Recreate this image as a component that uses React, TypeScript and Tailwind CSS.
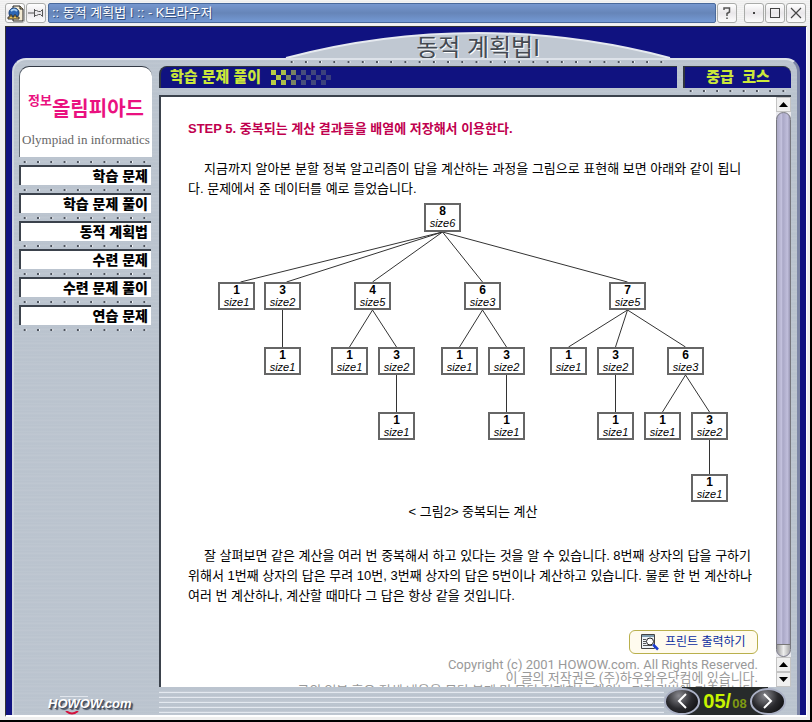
import React from "react";

const KR = "font-['Liberation_Sans','Noto_Sans_CJK_KR',sans-serif]";
const METAL =
  "bg-[#bcc5d0] bg-[repeating-linear-gradient(180deg,#bec7d1_0px,#b9c2cd_2px,#c0c8d2_3px,#bac3ce_5px,#bbc4cf_7px)]";

const nodes = [
  { x: 236, y: 0, n: 8, size: 6 },
  { x: 30, y: 79, n: 1, size: 1 },
  { x: 76, y: 79, n: 3, size: 2 },
  { x: 166, y: 79, n: 4, size: 5 },
  { x: 276, y: 79, n: 6, size: 3 },
  { x: 421, y: 79, n: 7, size: 5 },
  { x: 76, y: 144, n: 1, size: 1 },
  { x: 143, y: 144, n: 1, size: 1 },
  { x: 190, y: 144, n: 3, size: 2 },
  { x: 253, y: 144, n: 1, size: 1 },
  { x: 300, y: 144, n: 3, size: 2 },
  { x: 362, y: 144, n: 1, size: 1 },
  { x: 409, y: 144, n: 3, size: 2 },
  { x: 479, y: 144, n: 6, size: 3 },
  { x: 190, y: 209, n: 1, size: 1 },
  { x: 300, y: 209, n: 1, size: 1 },
  { x: 409, y: 209, n: 1, size: 1 },
  { x: 456, y: 209, n: 1, size: 1 },
  { x: 503, y: 209, n: 3, size: 2 },
  { x: 503, y: 271, n: 1, size: 1 },
];

const edges: [number, number][] = [
  [0, 1], [0, 2], [0, 3], [0, 4], [0, 5],
  [2, 6], [3, 7], [3, 8], [4, 9], [4, 10],
  [5, 11], [5, 12], [5, 13],
  [8, 14], [10, 15], [12, 16], [13, 17], [13, 18], [18, 19],
];

const menu = ["학습 문제", "학습 문제 풀이", "동적 계획법", "수련 문제", "수련 문제 풀이", "연습 문제"];

function Rivets({ className = "" }: { className?: string }) {
  return (
    <div
      aria-hidden="true"
      className={`h-[3px] bg-[linear-gradient(90deg,transparent_5px,#4c525c_5px,#4c525c_7px,#f4f6fa_7px,#f4f6fa_8px,transparent_8px)] bg-[length:14px_2px] [background-repeat:round_no-repeat] ${className}`}
    />
  );
}

function TitleBar() {
  const btn =
    "flex h-5 w-5 items-center justify-center rounded-[3px] border border-[#a9aba9] bg-[linear-gradient(#ffffff,#e9e7ea_50%,#fdfdfd)] text-[#555]";
  return (
    <header className="flex h-[26px] shrink-0 items-center gap-px bg-[repeating-linear-gradient(#f3f3f3_0px,#f3f3f3_1px,#e9e9e9_2px)] pr-1 pl-[5px]">
      <button className={btn} aria-label="창 메뉴">
        <svg width="17" height="17" viewBox="0 0 17 17">
          <path d="M6 1h7l3 3v12H6z" fill="#f3ead2" stroke="#222" />
          <path d="M13 1v3h3" fill="#cdbb8a" stroke="#222" />
          <circle cx="7" cy="8" r="5" fill="#2c66b4" stroke="#123a70" />
          <path d="M4 6q3-3 6 0" fill="none" stroke="#a9d0f5" strokeWidth="2" />
          <path d="M1 14v-2h2v-2h2v2h2v-2h2v2h3v2z" fill="#edc65a" stroke="#333" />
        </svg>
      </button>
      <button className={btn} aria-label="고정">
        <svg width="16" height="12" viewBox="0 0 16 12" fill="none" stroke="#555">
          <path d="M0 6h6M6.500 2v8M6.500 3.500h2l2 1h2l2-2v7l-2-2h-2l-2 1h-2" />
        </svg>
      </button>
      <h1 className="ml-px flex h-5 flex-1 items-center rounded-[2px] border border-[#49699b] bg-[linear-gradient(#7697cf,#6685b8_50%,#7499d4)] pl-[3px] text-[13px] whitespace-pre text-white [text-shadow:1px_1px_0_#33507f]">
        {":: 동적 계획법 I :: - K브라우저"}
      </h1>
      <button className={btn} aria-label="도움말">
        <svg width="10" height="14" viewBox="0 0 10 14" fill="none" stroke="#555" strokeWidth="1.500">
          <path d="M2 4V2h5.500v4L5 7.500V10M5 11.500V13" />
        </svg>
      </button>
      <button className={`${btn} ml-1.5`} aria-label="최소화">
        <span className="size-[2px] bg-[#444]" />
      </button>
      <button className={btn} aria-label="최대화">
        <span className="size-[10px] border border-[#444]" />
      </button>
      <button className={btn} aria-label="닫기">
        <svg width="12" height="12" viewBox="0 0 12 12" stroke="#444" strokeWidth="1.200">
          <path d="M1 1l10 10M11 1L1 11" />
        </svg>
      </button>
    </header>
  );
}

function Sidebar() {
  return (
    <aside className="flex w-[133px] shrink-0 flex-col pt-[6px]">
      <div className="flex h-[91px] flex-col items-center rounded-t-[10px] border-t border-l border-t-[#333a44] border-l-[#5c6470] bg-white pt-[24px] whitespace-nowrap">
        <div className="flex h-8 items-start font-bold text-[#ea1180]">
          <span className="text-[13px] leading-5">정보</span>
          <span className="text-[20px] leading-9">올림피아드</span>
        </div>
        <div className="mt-[7px] font-['Liberation_Serif',serif] text-[13px] leading-5 text-[#666]">
          Olympiad in informatics
        </div>
      </div>
      <nav className="flex flex-col">
        {menu.map((m) => (
          <div key={m}>
            <Rivets className="mt-1 mb-px" />
            <a
              href="#"
              className="mr-px flex h-5 items-center justify-end border-t-2 border-l-2 border-t-[#3b424c] border-l-[#3b424c] bg-white pr-[3px] text-[14px] font-black text-black"
            >
              {m}
            </a>
          </div>
        ))}
        <Rivets className="mt-1" />
      </nav>
      <div className="mt-auto ml-[29px] flex flex-col">
        <div className="ml-3 h-px w-7 bg-[#e0e5ec]" />
        <div className="text-[13px] leading-[14px] font-bold text-white italic [text-shadow:1px_1px_0_#47505e,2px_2px_1px_#47505e]">
          HOWOW.com
        </div>
        <svg width="14" height="4" viewBox="0 0 14 4" className="ml-[17px]" aria-hidden="true">
          <path d="M1 0q6 5 12 0" fill="none" stroke="#d3123c" strokeWidth="2" />
        </svg>
      </div>
    </aside>
  );
}

function CallTree() {
  const bottom = (i: number) => nodes[i].y + (i === 0 ? 29 : 28);
  return (
    <figure className="flex flex-col items-center">
      <div className="relative h-[299px] w-[570px]">
        <svg width="570" height="299" className="block" stroke="#333" aria-hidden="true">
          {edges.map(([a, b]) => (
            <line
              key={`${a}-${b}`}
              x1={nodes[a].x + 18.5}
              y1={bottom(a)}
              x2={nodes[b].x + (a === 0 && b < 3 ? 22.5 : 18.5)}
              y2={nodes[b].y}
            />
          ))}
        </svg>
        {nodes.map((d, i) => (
          <div
            key={i}
            className={`absolute w-[37px] border-2 border-[#666] bg-white text-center text-black ${i === 0 ? "h-[29px]" : "h-7"}`}
            style={{ left: d.x, top: d.y }}
          >
            <b className="block text-[12px] leading-3">{d.n}</b>
            <i className="block text-[11px] leading-3">size{d.size}</i>
          </div>
        ))}
      </div>
      <figcaption>&lt; 그림2&gt; 중복되는 계산</figcaption>
    </figure>
  );
}

function Arrow({ down = false }: { down?: boolean }) {
  return (
    <button
      aria-label={down ? "아래로" : "위로"}
      className="flex h-[15px] shrink-0 items-center justify-center border border-[#c4c4c4] bg-[#f0f0f0]"
    >
      <svg width="9" height="5" viewBox="0 0 9 5">
        <path d={down ? "M0 0h9L4.500 5z" : "M0 5h9L4.500 0z"} />
      </svg>
    </button>
  );
}

function PageBody() {
  return (
    <div className="flex min-h-0 flex-1 border-t-2 border-l-2 border-[#3b424c] bg-white">
      <article className="min-w-0 flex-1 overflow-hidden pt-[22px] pr-[18px] pl-[27px] text-[13px] leading-5 whitespace-nowrap text-black">
        <h2 className="font-bold text-[#c0004e]">
          STEP 5. 중복되는 계산 결과들을 배열에 저장해서 이용한다.
        </h2>
        <p className="mt-5 mb-1 indent-4">
          지금까지 알아본 분할 정복 알고리즘이 답을 계산하는 과정을 그림으로 표현해 보면 아래와 같이 됩니
          <br />
          다. 문제에서 준 데이터를 예로 들었습니다.
        </p>
        <CallTree />
        <p className="mt-6 indent-4">
          잘 살펴보면 같은 계산을 여러 번 중복해서 하고 있다는 것을 알 수 있습니다. 8번째 상자의 답을 구하기
          <br />
          위해서 1번째 상자의 답은 무려 10번, 3번째 상자의 답은 5번이나 계산하고 있습니다. 물론 한 번 계산하나
          <br />
          여러 번 계산하나, 계산할 때마다 그 답은 항상 같을 것입니다.
        </p>
        <div className="mt-6 flex justify-end">
          <button className="flex h-6 w-[129px] items-center gap-[6px] rounded-md border border-[#b9b04c] bg-[#fffbee] pl-[11px] text-[12px] text-[#0a2ca0]">
            <svg width="18" height="17" viewBox="0 0 18 17">
              <path d="M.5.5h13v14H.5z" fill="#eef3f7" stroke="#444" />
              <path d="M1 2h12" stroke="#7f9db0" strokeWidth="2" />
              <path d="M2 5.500h3M2 7.500h3M2 9.500h3M2 11.500h9" stroke="#555" />
              <circle cx="9" cy="7.500" r="3.500" fill="#fff" stroke="#222" />
              <path d="M12 10.500l5 5" stroke="#1b3bd0" strokeWidth="2.500" />
            </svg>
            프린트 출력하기
          </button>
        </div>
        <footer className="mt-1 flex flex-col items-end font-['Roboto','Noto_Sans_CJK_KR',sans-serif] text-[13px] leading-[13px] text-[#999]">
          <span>Copyright (c) 2001 HOWOW.com. All Rights Reserved.</span>
          <span>이 글의 저작권은 (주)하우와우닷컴에 있습니다.</span>
          <span>글의 일부 혹은 전체 내용을 무단 복제 및 무단 전재하는 행위는 저작권법에 저촉됩니다.</span>
        </footer>
      </article>
      <div className="flex w-[15px] shrink-0 flex-col bg-[#e9e9ee]">
        <Arrow />
        <div className="flex flex-1 flex-col justify-end overflow-hidden rounded-full border border-[#77777f] bg-[linear-gradient(90deg,#aaa8c4,#c3c1dd_35%,#a9a7c6_45%,#c0bedb_80%,#9997b3)]">
          <span className="h-3 rounded-b-full border-t border-[#777] bg-[linear-gradient(90deg,#999,#eee_50%,#aaa)]" />
        </div>
        <Arrow />
        <Arrow down />
      </div>
    </div>
  );
}

function Pager() {
  const round =
    "flex h-[27px] w-9 items-center justify-center rounded-[50%] border-2 border-[#aab0c4] bg-[radial-gradient(circle_at_40%_25%,#8a8a90,#2a2a2e_50%,#050505)]";
  return (
    <div className="flex h-7 shrink-0 items-center rounded-full bg-[linear-gradient(90deg,transparent_18px,#272b2b_18px,#272b2b_104px,transparent_104px)]">
      <button className={round} aria-label="이전">
        <svg width="10" height="16" viewBox="0 0 10 16" fill="none" stroke="#fff" strokeWidth="2">
          <path d="M9 1L2 8l7 7" />
        </svg>
      </button>
      <div className="flex w-[50px] items-baseline justify-center gap-px font-bold whitespace-nowrap">
        <span className="text-[20px] leading-7 text-[#c8f400]">05/</span>
        <span className="text-[13px] text-[#7f9a12]">08</span>
      </div>
      <button className={round} aria-label="다음">
        <svg width="10" height="16" viewBox="0 0 10 16" fill="none" stroke="#fff" strokeWidth="2">
          <path d="M1 1l7 7-7 7" />
        </svg>
      </button>
    </div>
  );
}

function Checks() {
  const cells = [];
  for (let c = 0; c < 12; c++)
    for (let r = 0; r < 3; r++)
      if ((c + r) % 2 === 0)
        cells.push(
          <rect
            key={`${c}-${r}`}
            x={c * 5}
            y={r * 5}
            width="5"
            height="5"
            fill={c < 3 ? "#b9cc45" : c < 5 ? "#8e9a5c" : "#59617a"}
            opacity={1 - c * 0.04}
          />,
        );
  return (
    <svg width="60" height="15" aria-hidden="true">
      {cells}
    </svg>
  );
}

export default function App() {
  return (
    <div className={`flex h-screen flex-col border-r-2 border-b-2 border-black bg-[#efefef] ${KR}`}>
      <TitleBar />
      <main className="mr-[3px] mb-[3px] ml-[5px] flex min-h-0 flex-1 flex-col border-t border-r border-b-2 border-l border-t-[#333] border-r-white border-b-white border-l-[#333] bg-[#101280] pr-[6px] pl-[6px]">
        <div className="flex h-[31px] shrink-0 items-end justify-center pl-[144px]">
          <svg width="384" height="25" viewBox="0 0 384 25" className="overflow-visible">
            <path d="M0 25A750 750 0 0 1 384 25z" fill="#c0c8d2" />
            <path d="M0 25A750 750 0 0 1 384 25" fill="none" stroke="#e6eaf0" strokeWidth="2" />
            <text
              x="192"
              y="23"
              fontSize="24"
              textAnchor="middle"
              fill="#444a52"
              className="[text-shadow:1px_1px_0_#fff]"
            >
              동적 계획법I
            </text>
          </svg>
        </div>
        <div
          className={`flex min-h-0 flex-1 rounded-t-[14px] border-t-2 border-r-[3px] border-l-2 border-t-[#dde2e9] border-r-[#7d86a6] border-l-[#d0d6df] pl-[5px] ${METAL}`}
        >
          <Sidebar />
          <div className="flex min-w-0 flex-1 flex-col pl-[7px]">
            <Rivets className="mx-auto mt-[1px] mb-[2px] w-[384px]" />
            <div className="mr-[6px] flex gap-[6px]">
              <div className="flex h-[22px] flex-1 items-center gap-[10px] rounded-tl-lg border-t border-l-2 border-[#30363f] bg-[#101280] pl-[9px] text-[15px] font-black text-[#cbe73a]">
                학습 문제 풀이
                <Checks />
              </div>
              <div className="flex h-[22px] w-[108px] items-center justify-center rounded-tr-lg border-t border-l-2 border-[#30363f] bg-[#101280] text-[15px] font-black whitespace-pre text-[#cbe73a]">
                중급  코스
              </div>
            </div>
            <div className="flex justify-end pr-[6px]">
              <Rivets className="my-[2px] w-[106px]" />
            </div>
            <div className="mr-[6px] flex min-h-0 flex-1 flex-col">
              <PageBody />
            </div>
            <div className="mr-[11px] flex h-7 shrink-0">
              <div className="mt-px flex-1 bg-[repeating-linear-gradient(transparent_0px,transparent_3px,#a3acb9_3px,#e4e9f0_4px,#e4e9f0_5px)]" />
              <Pager />
            </div>
          </div>
        </div>
      </main>
    </div>
  );
}
